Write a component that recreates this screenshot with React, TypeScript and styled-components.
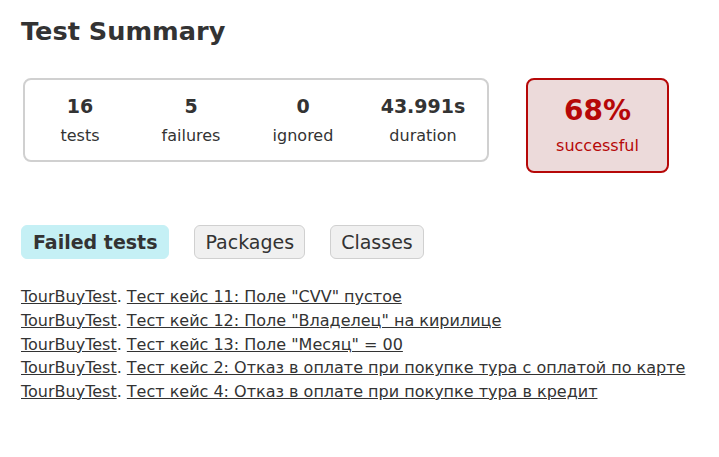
import styled, { createGlobalStyle } from "styled-components";

const GlobalStyle = createGlobalStyle`
  body {
    margin: 0;
    padding: 0;
    background: #ffffff;
    font-family: "DejaVu Sans", sans-serif;
    color: #333333;
  }
`;

type Counter = { value: string; label: string };

const counters: Counter[] = [
  { value: "16", label: "tests" },
  { value: "5", label: "failures" },
  { value: "0", label: "ignored" },
  { value: "43.991s", label: "duration" },
];

const failed = [
  'Тест кейс 11: Поле "CVV" пустое',
  'Тест кейс 12: Поле "Владелец" на кирилице',
  'Тест кейс 13: Поле "Месяц" = 00',
  "Тест кейс 2: Отказ в оплате при покупке тура с оплатой по карте",
  "Тест кейс 4: Отказ в оплате при покупке тура в кредит",
];

export default function App() {
  return (
    <>
      <GlobalStyle />
      <Content>
        <Title>Test Summary</Title>
        <SummaryRow>
          <SummaryBox>
            {counters.map((c) => (
              <CounterCell key={c.label}>
                <CounterValue>{c.value}</CounterValue>
                <CounterLabel>{c.label}</CounterLabel>
              </CounterCell>
            ))}
          </SummaryBox>
          <SuccessBox>
            <SuccessRate>68%</SuccessRate>
            <SuccessLabel>successful</SuccessLabel>
          </SuccessBox>
        </SummaryRow>
        <Tabs>
          <Tab $selected>Failed tests</Tab>
          <Tab>Packages</Tab>
          <Tab>Classes</Tab>
        </Tabs>
        <FailedList>
          {failed.map((name) => (
            <li key={name}>
              <a href="#">TourBuyTest</a>. <a href="#">{name}</a>
            </li>
          ))}
        </FailedList>
      </Content>
    </>
  );
}

const Content = styled.div`
  padding: 14px 21px;
`;

const Title = styled.h1`
  margin: 0;
  font-size: 25.6px;
  font-weight: bold;
  line-height: 34px;
  color: #333333;
`;

const SummaryRow = styled.div`
  display: flex;
  align-items: flex-start;
  gap: 37px;
  margin-top: 30px;
  margin-left: 2px;
`;

const SummaryBox = styled.div`
  display: grid;
  grid-template-columns: 110px 112px 112px 1fr;
  width: 466px;
  height: 84px;
  box-sizing: border-box;
  border: 2px solid #d0d0d0;
  border-radius: 8px;
`;

const CounterCell = styled.div`
  display: flex;
  flex-direction: column;
  align-items: center;
  padding-top: 14px;
  gap: 7.5px;
`;

const CounterValue = styled.div`
  font-size: 19px;
  font-weight: bold;
  line-height: 24px;
`;

const CounterLabel = styled.div`
  font-size: 16px;
  line-height: 20px;
`;

const SuccessBox = styled.div`
  width: 143px;
  height: 95px;
  box-sizing: border-box;
  border: 2px solid #b60808;
  border-radius: 8px;
  background: #ecdada;
  color: #b60808;
  display: flex;
  flex-direction: column;
  align-items: center;
  padding-top: 14px;
  gap: 8px;
`;

const SuccessRate = styled.div`
  font-size: 28px;
  font-weight: bold;
  line-height: 34px;
`;

const SuccessLabel = styled.div`
  font-size: 16px;
  line-height: 20px;
`;

const Tabs = styled.div`
  display: flex;
  gap: 25px;
  margin-top: 52px;
`;

const Tab = styled.div<{ $selected?: boolean }>`
  height: 34px;
  box-sizing: border-box;
  display: flex;
  align-items: center;
  padding: 0 ${(p) => (p.$selected ? "11px" : "10px")};
  border-radius: 6px;
  font-size: 19px;
  font-weight: ${(p) => (p.$selected ? "bold" : "normal")};
  background: ${(p) => (p.$selected ? "#c5f0f5" : "#f0f0f0")};
  border: 1px solid ${(p) => (p.$selected ? "#c5f0f5" : "#d0d0d0")};
`;

const FailedList = styled.ul`
  list-style: none;
  margin: 26px 0 0;
  padding: 0;
  font-size: 16px;
  line-height: 23.75px;

  a {
    color: #333333;
    text-decoration: underline;
  }
`;
